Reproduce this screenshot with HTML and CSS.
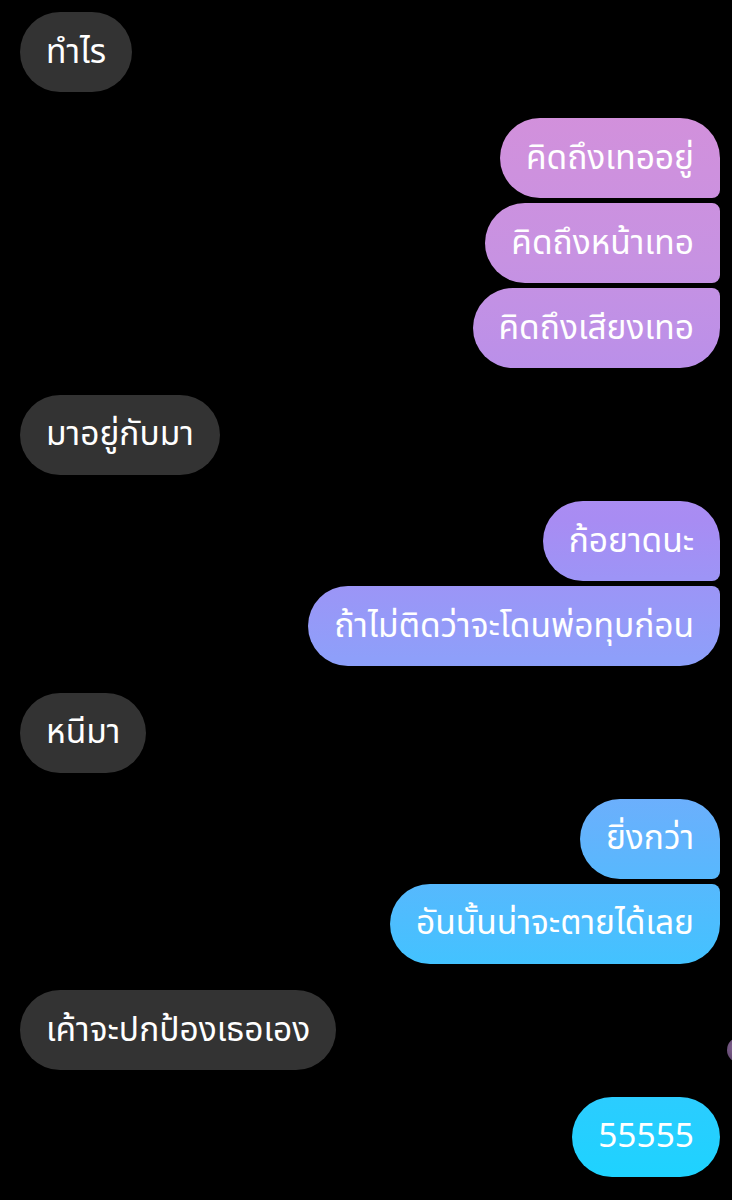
FILE: index.html
```html
<!DOCTYPE html>
<html>
<head>
    <meta charset="utf-8">
    <title>Chat</title>
    <link rel="stylesheet" href="styles.css">
</head>
<body>
    <div class="chat">
        <div class="group in">
            <div class="bubble">ทำไร</div>
        </div>
        <div class="group out">
            <div class="bubble">คิดถึงเทออยู่</div>
            <div class="bubble">คิดถึงหน้าเทอ</div>
            <div class="bubble">คิดถึงเสียงเทอ</div>
        </div>
        <div class="group in">
            <div class="bubble">มาอยู่กับมา</div>
        </div>
        <div class="group out">
            <div class="bubble">ก้อยาดนะ</div>
            <div class="bubble">ถ้าไม่ติดว่าจะโดนพ่อทุบก่อน</div>
        </div>
        <div class="group in">
            <div class="bubble">หนีมา</div>
        </div>
        <div class="group out">
            <div class="bubble">ยิ่งกว่า</div>
            <div class="bubble">อันนั้นน่าจะตายได้เลย</div>
        </div>
        <div class="group in seen-row">
            <div class="bubble">เค้าจะปกป้องเธอเอง</div>
            <span class="seen"></span>
        </div>
        <div class="group out">
            <div class="bubble">55555</div>
        </div>
    </div>
</body>
</html>
```

FILE: styles.css
```css
body {
    margin: 0;
    background: #000;
    font-family: "Noto Sans Thai", "Noto Sans", "DejaVu Sans", sans-serif;
    overflow: hidden;
}

.chat {
    display: flex;
    flex-direction: column;
    gap: 26.4px;
    padding: 12px 12px 0 20px;
}

.group {
    display: flex;
    flex-direction: column;
    gap: 5px;
}

.group.in {
    align-items: flex-start;
}

.group.out {
    align-items: flex-end;
}

.bubble {
    height: 80px;
    box-sizing: border-box;
    padding: 0 26px;
    display: flex;
    align-items: center;
    border-radius: 40px;
    color: #fff;
    font-size: 33.5px;
    white-space: nowrap;
}

.in .bubble {
    background: #333;
}

.out .bubble {
    background: linear-gradient(180deg,
        #db8fd6 0px,
        #c792e2 260px,
        #a88cf3 520px,
        #8aa2fb 680px,
        #5cb6fd 860px,
        #3fc4ff 980px,
        #1ad4ff 1200px) fixed;
}

.out .bubble:first-child {
    border-radius: 40px 40px 8px 40px;
}

.out .bubble + .bubble {
    border-radius: 40px 8px 8px 40px;
}

.out .bubble:last-child {
    border-radius: 40px 8px 40px 40px;
}

.out .bubble:only-child {
    border-radius: 40px;
}

.seen-row {
    position: relative;
}

.seen {
    position: absolute;
    right: -33px;
    top: 47px;
    width: 26px;
    height: 26px;
    border-radius: 50%;
    background: radial-gradient(circle at 40% 40%, #8a6a9a, #4a3456);
}
```
